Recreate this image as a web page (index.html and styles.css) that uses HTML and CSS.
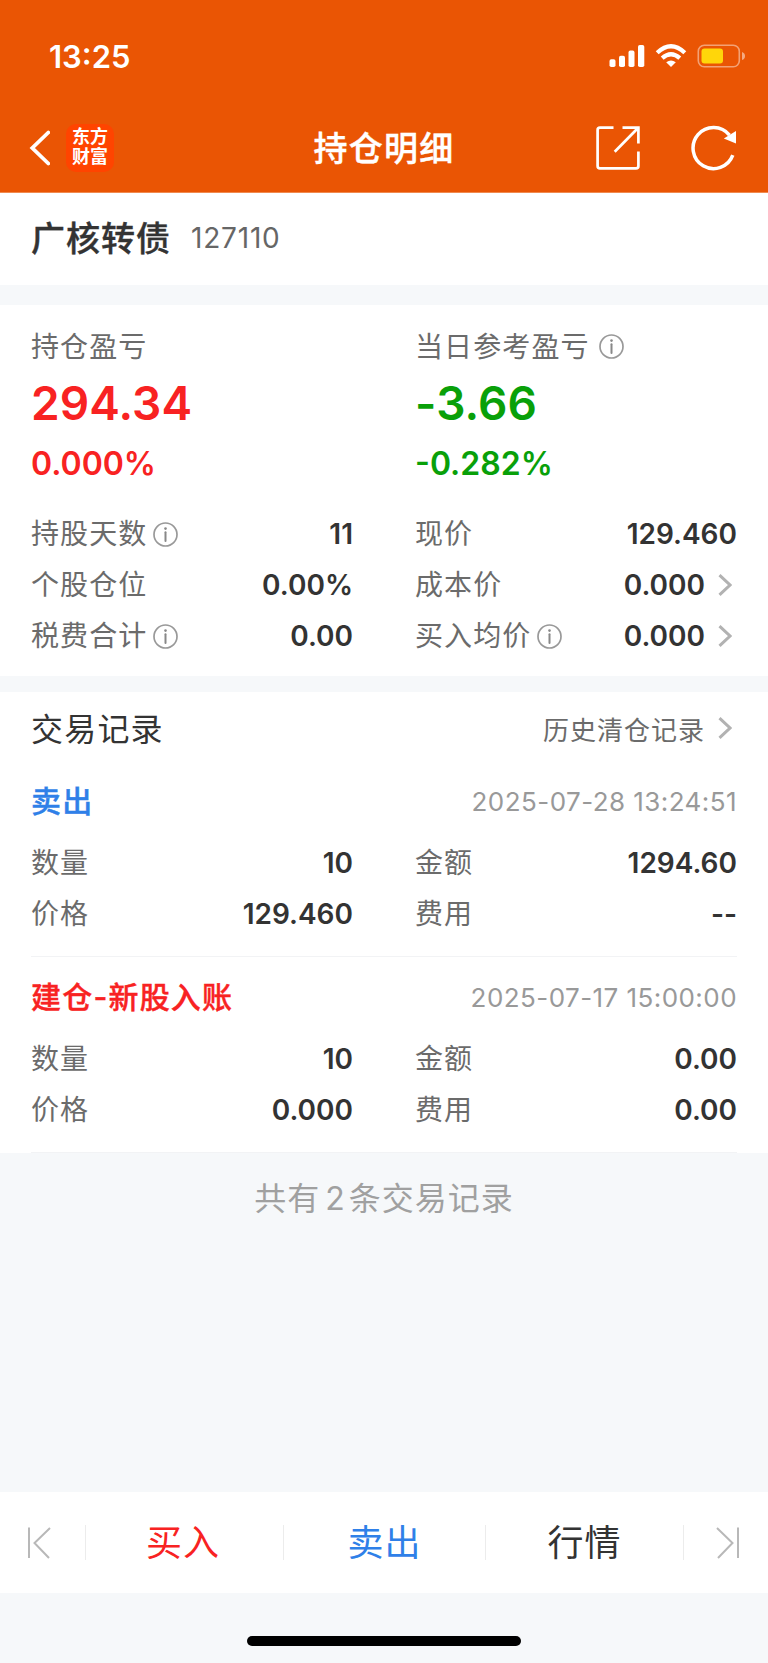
FILE: index.html
```html
<!DOCTYPE html>
<html lang="zh-CN">
<head>
    <meta charset="UTF-8">
    <meta name="viewport" content="width=device-width, initial-scale=1.0">
    <title>持仓明细</title>
    <link rel="stylesheet" href="styles.css">
</head>
<body>
    <svg class="sprite">
        <symbol id="info" viewBox="0 0 25 25">
            <circle cx="12.5" cy="12.5" r="11.5" fill="none" stroke="#999" stroke-width="1.7"/>
            <circle cx="12.5" cy="6.6" r="1.3" fill="#888"/>
            <path d="M12.5 10.3V19" stroke="#888" stroke-width="2" stroke-linecap="round"/>
        </symbol>
        <symbol id="arrow" viewBox="0 0 14 22">
            <path d="M1.5 1.2L12 11L1.5 20.8" fill="none" stroke="#b2b2b2" stroke-width="3"/>
        </symbol>
    </svg>

    <header class="header">
        <div class="status-bar">
            <span class="time">13:25</span>
            <svg class="status-icons" width="138" height="26" viewBox="0 0 138 26">
                <g fill="#fff">
                    <rect x="1.5" y="16.3" width="6" height="7.7" rx="1.8"/>
                    <rect x="11" y="12.8" width="6" height="11.2" rx="1.8"/>
                    <rect x="20.5" y="7.6" width="6" height="16.4" rx="1.8"/>
                    <rect x="30" y="2" width="6.3" height="22" rx="1.8"/>
                    <path d="M63 24L58.2 19.3Q63 15.6 67.8 19.3Z"/>
                </g>
                <g fill="none" stroke="#fff" stroke-width="4.3">
                    <path d="M49.2 9.8Q63 -3.2 76.8 9.8"/>
                    <path d="M54.2 15.2Q63 7.4 71.8 15.2"/>
                </g>
                <rect x="90.3" y="2.3" width="41" height="21.4" rx="6" fill="none" stroke="#fff" stroke-opacity=".45" stroke-width="1.6"/>
                <rect x="93.5" y="5.5" width="21.5" height="15" rx="3" fill="#ffd60a"/>
                <path d="M134 9Q137 10 137 13Q137 16 134 17Z" fill="#fff" fill-opacity=".5"/>
            </svg>
        </div>
        <div class="nav">
            <div class="nav-left">
                <svg width="22" height="38" viewBox="0 0 22 38">
                    <path d="M20.3 3.5L4.3 19L20.3 34.5" fill="none" stroke="#fff" stroke-width="3.8" stroke-linecap="round"/>
                </svg>
                <div class="logo">东方<br>财富</div>
            </div>
            <h1 class="nav-title">持仓明细</h1>
            <div class="nav-right">
                <svg width="44" height="44" viewBox="0 0 44 44" fill="none" stroke="#fff" stroke-width="2.7">
                    <path d="M17.5 1.6H4Q1.6 1.6 1.6 4V40Q1.6 42.4 4 42.4H40Q42.4 42.4 42.4 40V25.5"/>
                    <path d="M26.5 1.6H42.4V17.5M42 2L18.7 25.7"/>
                </svg>
                <svg width="46" height="46" viewBox="0 0 46 46">
                    <path d="M41.8 30.2A20.5 20.5 0 1 1 38.5 10.2" fill="none" stroke="#fff" stroke-width="3.5"/>
                    <path d="M45 6V18.6L32.8 13.5Z" fill="#fff"/>
                </svg>
            </div>
        </div>
    </header>

    <section class="stock">
        <span class="stock-name">广核转债</span>
        <span class="stock-code">127110</span>
    </section>

    <section class="summary">
        <div class="columns">
            <div class="profit red">
                <div class="label">持仓盈亏</div>
                <div class="profit-value">294.34</div>
                <div class="profit-rate">0.000%</div>
            </div>
            <div class="profit green">
                <div class="label">当日参考盈亏<svg class="info wide"><use href="#info"/></svg></div>
                <div class="profit-value">-3.66</div>
                <div class="profit-rate">-0.282%</div>
            </div>
        </div>
        <div class="columns">
            <div class="row"><span class="label">持股天数<svg class="info"><use href="#info"/></svg></span><span class="value">11</span></div>
            <div class="row"><span class="label">现价</span><span class="value">129.460</span></div>
            <div class="row"><span class="label">个股仓位</span><span class="value">0.00%</span></div>
            <div class="row"><span class="label">成本价</span><span class="value">0.000<svg class="arrow"><use href="#arrow"/></svg></span></div>
            <div class="row"><span class="label">税费合计<svg class="info"><use href="#info"/></svg></span><span class="value">0.00</span></div>
            <div class="row"><span class="label">买入均价<svg class="info"><use href="#info"/></svg></span><span class="value">0.000<svg class="arrow"><use href="#arrow"/></svg></span></div>
        </div>
    </section>

    <section class="records">
        <div class="records-head">
            <h2 class="records-title">交易记录</h2>
            <a class="history">历史清仓记录<svg class="arrow"><use href="#arrow"/></svg></a>
        </div>
        <div class="record">
            <div class="record-head">
                <span class="record-type blue">卖出</span>
                <span class="record-time">2025-07-28 13:24:51</span>
            </div>
            <div class="columns">
                <div class="row"><span class="label">数量</span><span class="value">10</span></div>
                <div class="row"><span class="label">金额</span><span class="value">1294.60</span></div>
                <div class="row"><span class="label">价格</span><span class="value">129.460</span></div>
                <div class="row"><span class="label">费用</span><span class="value">--</span></div>
            </div>
        </div>
        <div class="record">
            <div class="record-head">
                <span class="record-type red">建仓-新股入账</span>
                <span class="record-time">2025-07-17 15:00:00</span>
            </div>
            <div class="columns">
                <div class="row"><span class="label">数量</span><span class="value">10</span></div>
                <div class="row"><span class="label">金额</span><span class="value">0.00</span></div>
                <div class="row"><span class="label">价格</span><span class="value">0.000</span></div>
                <div class="row"><span class="label">费用</span><span class="value">0.00</span></div>
            </div>
        </div>
    </section>

    <p class="total">共有<span class="count">2</span>条交易记录</p>

    <nav class="tabs">
        <span class="tab-end">
            <svg width="24" height="32" viewBox="0 0 24 32" fill="none" stroke="#b8b8b8" stroke-width="2">
                <path d="M2 .5V31M23 1L7.5 16L22 31"/>
            </svg>
        </span>
        <span class="tab red">买入</span>
        <span class="tab blue">卖出</span>
        <span class="tab">行情</span>
        <span class="tab-end">
            <svg width="24" height="32" viewBox="0 0 24 32" fill="none" stroke="#b8b8b8" stroke-width="2">
                <path d="M22 .5V31M1 1L16.5 16L2 31"/>
            </svg>
        </span>
    </nav>
    <div class="home"><div class="home-bar"></div></div>
</body>
</html>
```
FILE: styles.css
```css
* {
    box-sizing: border-box;
}
body {
    margin: 0;
    height: 1663px;
    display: flex;
    flex-direction: column;
    background-color: #f6f8fa;
    color: #333;
    font-family: Inter, "Noto Sans CJK SC", sans-serif;
}
h1, h2, p {
    margin: 0;
    font-weight: normal;
}
svg {
    flex: none;
}
.sprite {
    display: none;
}
.header {
    height: 193px;
    background-color: #ea5504;
    border-bottom: 1px solid #f08a50;
    color: #fff;
}
.status-bar {
    height: 104px;
    padding: 8px 22px 0 49px;
    display: flex;
    align-items: center;
    justify-content: space-between;
}
.time {
    font-size: 31px;
    font-weight: 600;
}
.nav {
    height: 88px;
    padding: 0 31px 0 28px;
    display: grid;
    grid-template-columns: 1fr auto 1fr;
    align-items: center;
}
.nav-left, .nav-right {
    display: flex;
    align-items: center;
}
.nav-left {
    gap: 16px;
}
.nav-right {
    gap: 51px;
    justify-content: flex-end;
}
.nav-title {
    padding: 0 0 4px 3px;
    font-size: 34px;
    font-weight: 500;
    letter-spacing: 1.2px;
    -webkit-text-stroke: 0.4px currentColor;
}
.logo {
    width: 48px;
    height: 48px;
    padding-top: 3px;
    border-radius: 10px;
    background-color: #ff4400;
    font-size: 18px;
    font-weight: 700;
    line-height: 20px;
    text-align: center;
}
.stock {
    height: 92px;
    padding: 0 31px 2px;
    display: flex;
    align-items: center;
    gap: 20px;
    background-color: #fff;
}
.stock-name {
    padding-bottom: 4px;
    font-size: 34px;
    font-weight: 500;
    letter-spacing: 1px;
    -webkit-text-stroke: 0.4px currentColor;
}
.stock-code {
    font-size: 28px;
    letter-spacing: 0.8px;
    color: #666;
}
.summary {
    height: 371px;
    margin-top: 20px;
    padding: 16px 31px 0 31px;
    background-color: #fff;
}
.columns {
    display: grid;
    grid-template-columns: 1fr 1fr;
    column-gap: 62px;
}
.profit {
    height: 187px;
}
.profit-value {
    height: 64px;
    line-height: 64px;
    font-size: 46px;
    font-weight: 600;
    letter-spacing: 0.1px;
}
.profit-rate {
    height: 58px;
    line-height: 58px;
    font-size: 32px;
    font-weight: 600;
}
.row {
    height: 51px;
    display: flex;
    align-items: center;
    justify-content: space-between;
}
.label {
    padding-bottom: 3px;
    display: flex;
    align-items: center;
    font-size: 28px;
    letter-spacing: 1.1px;
    color: #6b6b6b;
}
.profit .label {
    height: 50px;
    padding-bottom: 2px;
}
.value {
    display: flex;
    align-items: center;
    font-size: 28px;
    font-weight: 600;
}
.info {
    width: 25px;
    height: 25px;
    margin: 4px 0 0 6px;
}
.info.wide {
    margin: 2px 0 0 9px;
}
.arrow {
    width: 14px;
    height: 22px;
    margin: 0 5px 0 13px;
}
.red {
    color: #f82222;
}
.green {
    color: #09a009;
}
.blue {
    color: #2f80e8;
}
.records {
    margin-top: 16px;
    padding: 0 31px 0 31px;
    background-color: #fff;
}
.records-head {
    height: 75px;
    padding-bottom: 1px;
    display: flex;
    align-items: center;
    justify-content: space-between;
}
.records-title {
    padding-bottom: 4px;
    font-size: 32px;
    letter-spacing: 1.2px;
}
.history {
    padding-bottom: 2px;
    display: flex;
    align-items: center;
    font-size: 26px;
    letter-spacing: 1px;
    color: #6b6b6b;
}
.record {
    padding-bottom: 17px;
    border-bottom: 1px solid #f2f3f5;
}
.record + .record {
    padding-top: 6px;
}
.record-head {
    height: 70px;
    padding-bottom: 2px;
    display: flex;
    align-items: center;
    justify-content: space-between;
}
.record-type {
    padding-bottom: 4px;
    font-size: 30px;
    font-weight: 500;
    letter-spacing: 1.2px;
    -webkit-text-stroke: 0.4px currentColor;
}
.record-time {
    font-size: 26px;
    letter-spacing: 0.44px;
    color: #999;
}
.total {
    height: 92px;
    line-height: 91px;
    font-size: 32px;
    letter-spacing: 1px;
    text-align: center;
    color: #a0a0a0;
}
.count {
    margin: 0 3px 0 5px;
}
.tabs {
    height: 101px;
    margin-top: auto;
    display: grid;
    grid-template-columns: 86px 198px 202px 198px 1fr;
    align-items: center;
    background-color: #fff;
}
.tab, .tab-end {
    height: 35px;
    display: flex;
    align-items: center;
    justify-content: center;
}
.tab {
    padding: 0 0 6px 0;
    font-size: 36px;
    letter-spacing: 1px;
}
.tab.red {
    padding-right: 3px;
}
.tab, .tab-end:first-child {
    border-right: 1px solid #ececec;
}
.tab-end:first-child {
    padding-right: 7px;
}
.tab-end:last-child {
    padding-left: 3px;
}
.home {
    height: 70px;
    padding-top: 43px;
}
.home-bar {
    width: 274px;
    height: 10px;
    margin: 0 auto;
    border-radius: 5px;
    background-color: #000;
}
```
